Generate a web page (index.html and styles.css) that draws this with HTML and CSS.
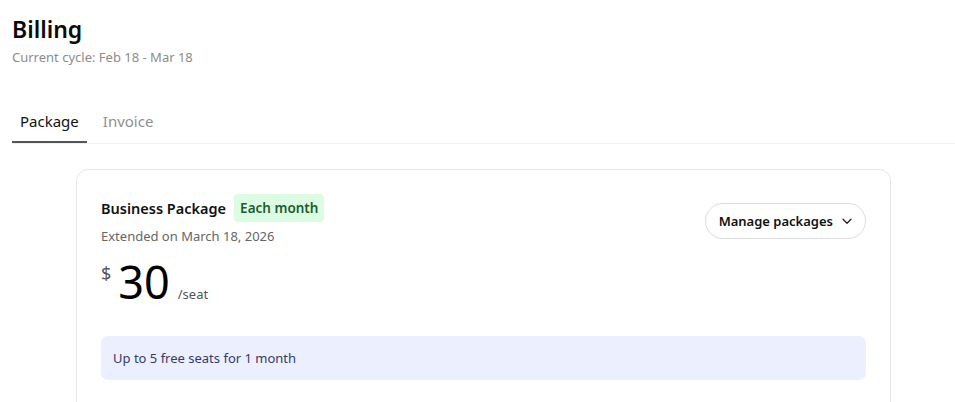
FILE: index.html
```html
<!DOCTYPE html>
<html lang="en">
<head>
<meta charset="utf-8">
<title>Billing</title>
<link rel="stylesheet" href="styles.css">
</head>
<body>
<div class="page">
  <header class="header">
    <h1 class="title">Billing</h1>
    <p class="subtitle">Current cycle: Feb 18 - Mar 18</p>
  </header>
  <nav class="tabs">
    <div class="tab tab-active">Package</div>
    <div class="tab">Invoice</div>
  </nav>
  <section class="card">
    <div class="card-top">
      <div class="plan">
        <div class="plan-name-row">
          <span class="plan-name">Business Package</span>
          <span class="badge">Each month</span>
        </div>
        <div class="plan-meta">Extended on March 18, 2026</div>
      </div>
      <button class="manage-btn">Manage packages
        <svg class="chev" width="12" height="12" viewBox="0 0 12 12"><path d="M2 4.2 L6 8.2 L10 4.2" fill="none" stroke="#222" stroke-width="1.3" stroke-linecap="round" stroke-linejoin="round"/></svg>
      </button>
    </div>
    <div class="price">
      <span class="currency">$</span>
      <span class="amount">30</span>
      <span class="unit">/seat</span>
    </div>
    <div class="info">Up to 5 free seats for 1 month</div>
  </section>
</div>
</body>
</html>
```
FILE: styles.css
```css
* { box-sizing: border-box; }
html, body { margin: 0; padding: 0; background: #fff; }
body {
  font-family: "Noto Sans", "Open Sans", sans-serif;
  color: #111;
  overflow: hidden;
}
.page { padding-left: 12px; }
.header { padding-top: 13px; }
.title {
  margin: 0;
  font-size: 23px;
  line-height: 32px;
  font-weight: 600;
  color: #0b0b0b;
}
.subtitle {
  margin: 2px 0 0;
  font-size: 13px;
  line-height: 20px;
  color: #8c8c8c;
}
.tabs {
  display: flex;
  margin-top: 34px;
  border-bottom: 1px solid #efefef;
}
.tab {
  padding: 9px 8px 11px;
  margin-right: 8px;
  font-size: 15px;
  line-height: 22px;
  color: #8f8f8f;
}
.tab-active {
  color: #111;
  box-shadow: inset 0 -2px 0 #555;
}
.card {
  margin: 25px 64px 0;
  border: 1px solid #e6e6e6;
  border-radius: 12px;
  padding: 24px 24px 40px;
  min-height: 300px;
}
.card-top {
  display: flex;
  justify-content: space-between;
  align-items: center;
}
.plan-name-row {
  display: flex;
  align-items: center;
  gap: 8px;
}
.plan-name {
  font-size: 14.5px;
  font-weight: 600;
  color: #111;
}
.badge {
  background: #dcfce3;
  color: #1e5c2e;
  font-size: 13.5px;
  font-weight: 600;
  line-height: 28px;
  padding: 0 6px;
  border-radius: 4px;
}
.plan-meta {
  margin-top: 4px;
  font-size: 13px;
  line-height: 20px;
  color: #666;
}
.manage-btn {
  display: flex;
  align-items: center;
  gap: 8px;
  height: 36px;
  padding: 0 12px 0 13px;
  border: 1px solid #dcdcdc;
  border-radius: 18px;
  background: #fff;
  font-family: inherit;
  font-size: 13px;
  font-weight: 600;
  color: #111;
  margin-top: 2px;
}
.price {
  display: flex;
  align-items: baseline;
  margin-top: 8px;
  height: 56px;
}
.currency {
  font-size: 18px;
  color: #555;
  align-self: flex-start;
  margin-top: 7px;
  margin-right: 7px;
}
.amount {
  font-size: 45px;
  line-height: 56px;
  color: #000;
}
.unit {
  margin-left: 8px;
  font-size: 13px;
  color: #555;
}
.info {
  margin-top: 26px;
  background: #eceffe;
  border-radius: 7px;
  padding: 12px 12px;
  font-size: 13px;
  line-height: 20px;
  color: #353a6b;
}
```
